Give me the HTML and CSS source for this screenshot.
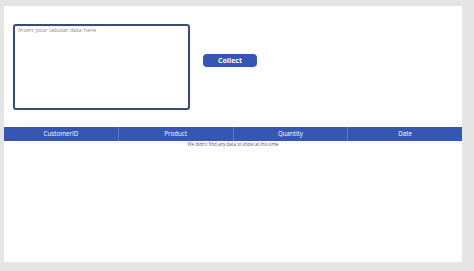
FILE: index.html
```html
<!DOCTYPE html>
<html>
<head>
<meta charset="utf-8">
<link rel="stylesheet" href="styles.css">
</head>
<body>
<div class="canvas">
  <div class="top">
    <div class="input">Insert your tabular data here</div>
    <button class="collect">Collect</button>
  </div>
  <div class="grid">
    <div class="head">
      <div class="col">CustomerID</div>
      <div class="col">Product</div>
      <div class="col">Quantity</div>
      <div class="col">Date</div>
    </div>
    <div class="empty">We didn't find any data to show at this time</div>
  </div>
</div>
</body>
</html>
```
FILE: styles.css
```css
html, body {
  margin: 0;
  padding: 0;
  background: #e5e5e5;
  font-family: "Open Sans", "Noto Sans", sans-serif;
}
.canvas {
  margin: 6px 0 0 4px;
  width: 458px;
  height: 256px;
  background: #ffffff;
  display: flex;
  flex-direction: column;
}
.top {
  display: flex;
  align-items: flex-start;
  padding: 18px 0 0 9px;
}
.input {
  box-sizing: border-box;
  width: 177px;
  height: 86px;
  border: 2px solid #3c4a78;
  border-radius: 3px;
  padding: 0 3px;
  font-size: 5.8px;
  line-height: 9px;
  color: #8a8a8a;
}
.collect {
  margin: 30px 0 0 13px;
  width: 54px;
  height: 13px;
  padding: 0;
  border: none;
  border-radius: 4px;
  background: #3557b2;
  color: #ffffff;
  font-family: "Open Sans", "Noto Sans", sans-serif;
  font-weight: 700;
  font-size: 7px;
  line-height: 13px;
}
.grid {
  margin-top: 17px;
}
.head {
  display: flex;
  height: 14px;
  background: #3557b2;
}
.col {
  flex: 1;
  color: #ffffff;
  font-size: 6.2px;
  line-height: 14px;
  text-align: center;
  border-left: 1px solid #5b7ac6;
}
.col:first-child {
  border-left: none;
}
.empty {
  text-align: center;
  font-size: 4.5px;
  color: #555555;
  line-height: 7px;
}
```
